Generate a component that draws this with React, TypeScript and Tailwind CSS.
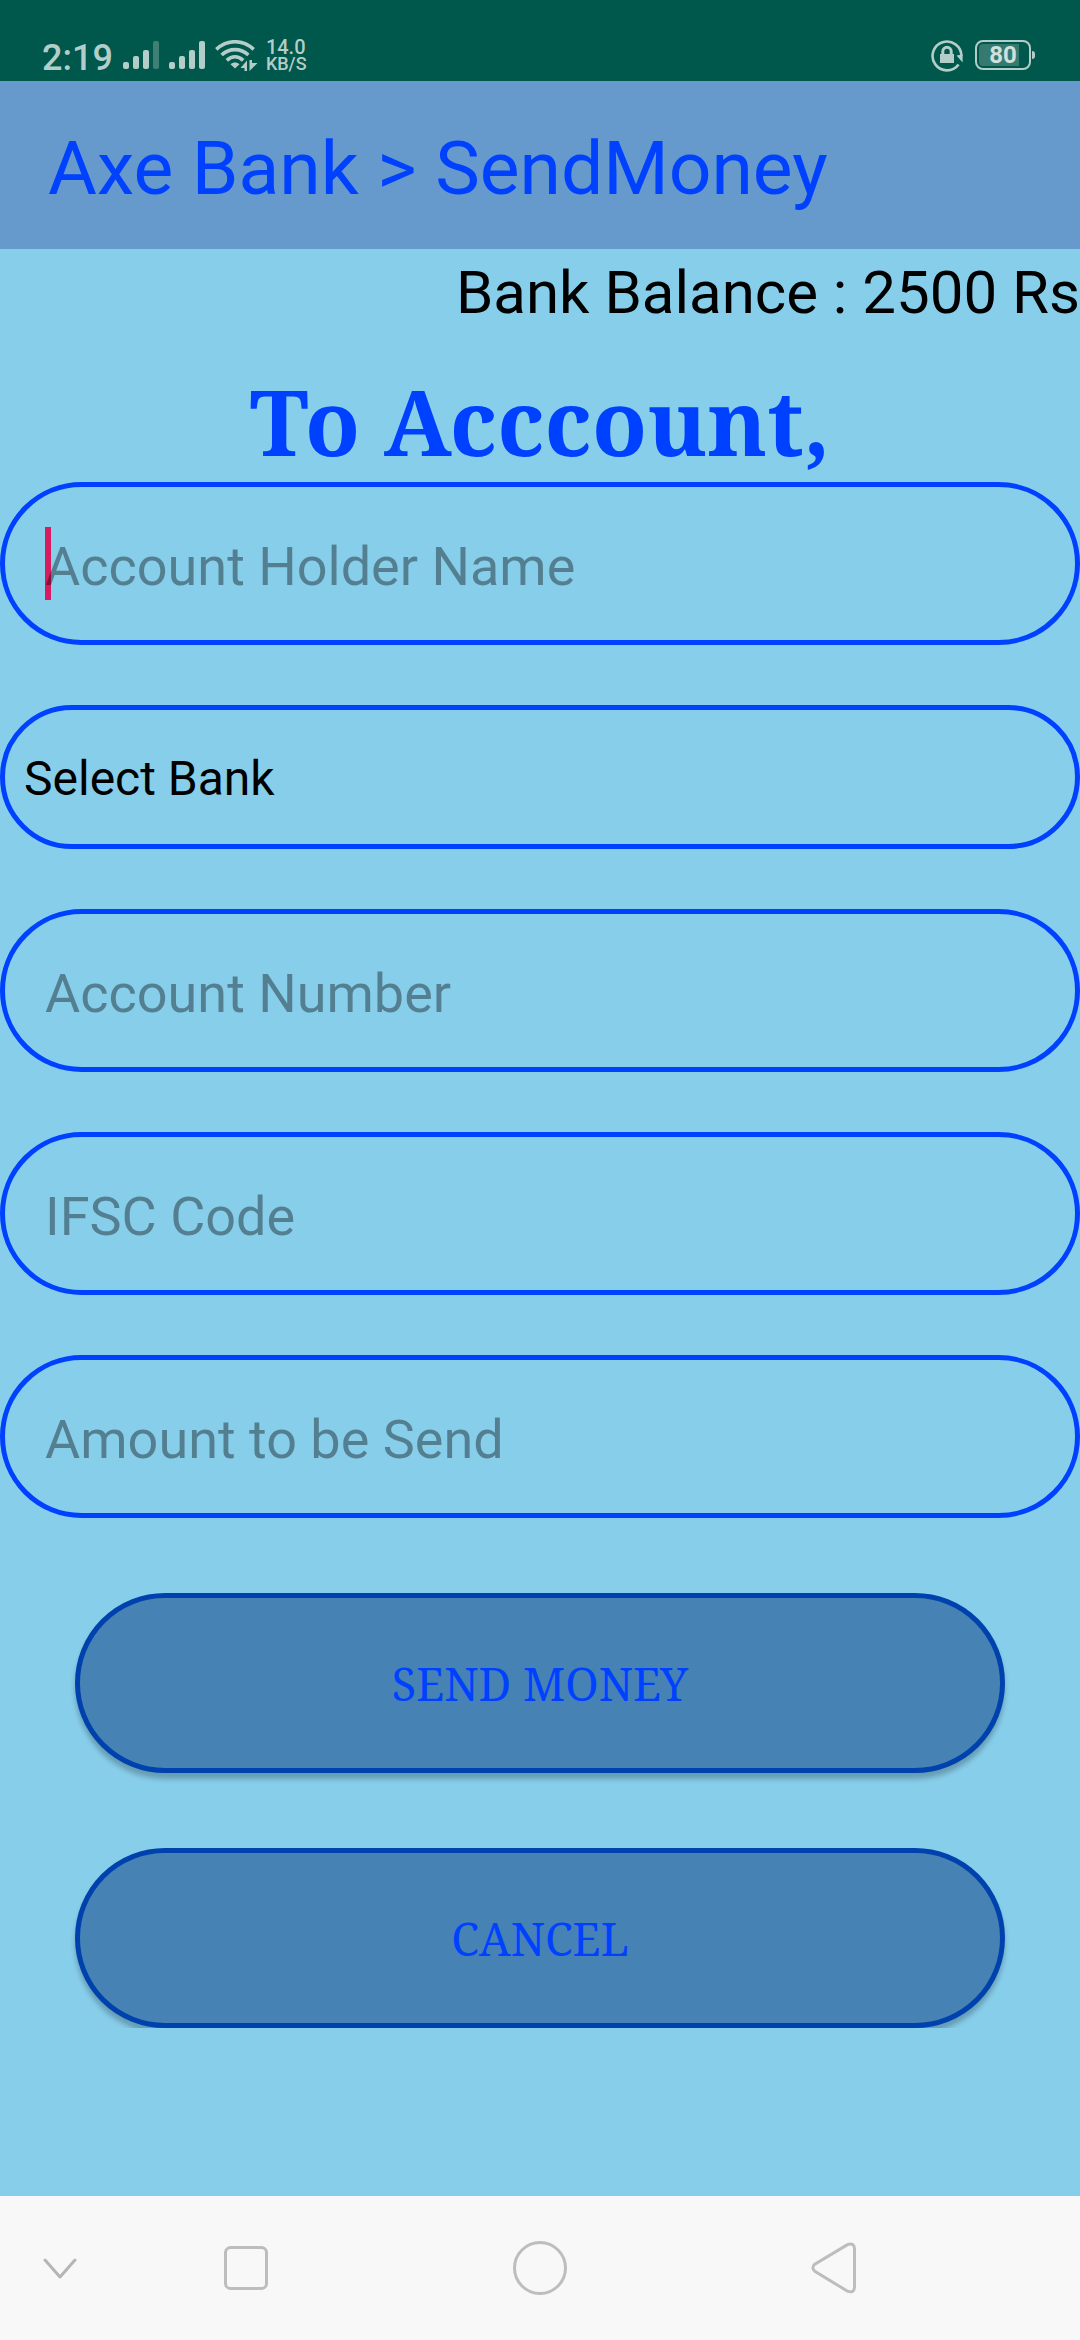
import type { ButtonHTMLAttributes, InputHTMLAttributes } from 'react';

function SignalIcon({ lastBarOpacity }: { lastBarOpacity: number }) {
  return (
    <svg width="36" height="28" viewBox="0 0 36 28" fill="currentColor" aria-hidden="true">
      <rect x="0" y="21" width="6" height="7" rx="2" />
      <rect x="10" y="15" width="6" height="13" rx="2" />
      <rect x="20" y="9" width="6" height="19" rx="2" />
      <rect x="30" y="0" width="6" height="28" rx="2" opacity={lastBarOpacity} />
    </svg>
  );
}

function WifiIcon() {
  return (
    <svg width="43" height="31" viewBox="0 0 43 31" fill="none" stroke="currentColor" strokeWidth="3.6" aria-hidden="true">
      <path d="M1.3 9.3C12.5-.8 27.500-.8 38.700 9.300" />
      <path d="M6.600 15C14.500 7.800 25.500 7.800 33.400 15" />
      <path d="M11.800 20.300C17 15.600 23 15.600 28.200 20.300" />
      <path d="M15.500 24.300C18 22 22 22 24.500 24.300L20 28.500Z" fill="currentColor" stroke="none" />
      <path d="M25.500 28L32 20.500V31H29.500V28Z" fill="currentColor" stroke="none" />
      <path d="M34.500 20V31L42.500 23H37V20Z" fill="currentColor" stroke="none" />
    </svg>
  );
}

function RotationLockIcon() {
  return (
    <svg width="32" height="32" viewBox="0 0 32 32" fill="none" stroke="currentColor" strokeWidth="2.6" aria-hidden="true">
      <path d="M27.600 24.500A14.400 14.400 0 1 1 30.400 16" />
      <path d="M25.500 15.500L31.600 14.500V22.500Z" fill="currentColor" stroke="none" />
      <path d="M11.800 14V11.500A4.200 4.200 0 0 1 20.200 11.500V14" strokeWidth="3" />
      <rect x="9" y="14" width="14" height="9" fill="currentColor" stroke="none" />
    </svg>
  );
}

function Battery({ level }: { level: number }) {
  return (
    <div className="flex items-center gap-px">
      <div className="relative flex h-[30px] w-14 items-center justify-center rounded-lg border-2 border-[#b3cdc9] p-0.5">
        <div className="absolute inset-y-0.5 left-0.5 w-10 rounded-l-sm bg-[#35796f]" />
        <span className="relative text-[24px] leading-[26px] font-bold text-[#cfe0dd]">{level}</span>
      </div>
      <div className="h-2 w-[3px] rounded-r-sm bg-[#b3cdc9]" />
    </div>
  );
}

function StatusBar() {
  return (
    <div className="flex h-[81px] items-end justify-between bg-[#00574b] pr-[45px] pl-[42px] text-[#b3cdc9]">
      <div className="flex h-[50px] items-start">
        <span className="mt-1.5 text-[36px] leading-[42px] font-medium">2:19</span>
        <div className="mt-2.5 ml-2.5 flex gap-2.5">
          <SignalIcon lastBarOpacity={0.35} />
          <SignalIcon lastBarOpacity={1} />
        </div>
        <div className="mt-[9px] ml-2.5">
          <WifiIcon />
        </div>
        <div className="mt-2 ml-2 flex flex-col font-medium">
          <span className="text-[20px] leading-[17px]">14.0</span>
          <span className="text-[18px] leading-[16px]">KB/S</span>
        </div>
      </div>
      <div className="flex h-[41px] items-start gap-3">
        <RotationLockIcon />
        <Battery level={80} />
      </div>
    </div>
  );
}

function Field({ label, focused, ...props }: { label: string; focused?: boolean } & InputHTMLAttributes<HTMLInputElement>) {
  return (
    <div className="relative">
      {focused && <span className="absolute top-[45px] left-[45px] h-[73px] w-1.5 bg-[#d81b60]" />}
      <input
        {...props}
        aria-label={label}
        placeholder={label}
        className="relative block h-[163px] w-full rounded-full border-5 border-[#0041ff] bg-transparent px-10 pt-1.5 text-[54px] text-black outline-none placeholder:text-black/38"
      />
    </div>
  );
}

function ActionButton(props: ButtonHTMLAttributes<HTMLButtonElement>) {
  return (
    <button
      {...props}
      className="h-[180px] w-full rounded-full border-5 border-[#0042ad] bg-[#4682b4] pt-0.5 font-['Noto_Serif','DejaVu_Serif_Condensed','DejaVu_Serif',serif] text-[45px] text-[#0041ff] uppercase shadow-[0_6px_5px_rgba(0,0,0,0.24)]"
    />
  );
}

function NavigationBar() {
  return (
    <nav className="grid h-36 grid-cols-[120fr_252fr_336fr_252fr_120fr] items-center justify-items-center bg-[#f8f8f8] text-[#bdbdbd]">
      <button aria-label="Hide keyboard">
        <svg width="34" height="22" viewBox="0 0 34 22" fill="none" stroke="#b5b5b5" strokeWidth="3" strokeLinecap="round" strokeLinejoin="round">
          <path d="M2 3L17 20L32 3" />
        </svg>
      </button>
      <button aria-label="Recent apps">
        <svg width="44" height="44" viewBox="0 0 44 44" fill="none" stroke="currentColor" strokeWidth="3">
          <rect x="1.500" y="1.500" width="41" height="41" rx="5" />
        </svg>
      </button>
      <button aria-label="Home">
        <svg width="54" height="54" viewBox="0 0 54 54" fill="none" stroke="currentColor" strokeWidth="3">
          <circle cx="27" cy="27" r="25.500" />
        </svg>
      </button>
      <button aria-label="Back">
        <svg width="46" height="52" viewBox="0 0 46 52" fill="none" stroke="currentColor" strokeWidth="3">
          <path d="M36.500 2.600L3.800 22.200Q0 25.500 3.800 29.300L36.500 49.200Q43 51.500 43.500 45.500V6.500Q43 .300 36.500 2.600Z" />
        </svg>
      </button>
    </nav>
  );
}

export default function App() {
  return (
    <div className="flex min-h-screen flex-col bg-[#87ceeb] font-[Roboto,sans-serif]">
      <StatusBar />
      <header className="flex h-[168px] items-center bg-[#6699cc] pt-1.5 pl-12">
        <h1 className="text-[75px] leading-[88px] text-[#0041ff]">Axe Bank &gt; SendMoney</h1>
      </header>
      <main className="flex-1">
        <p className="pt-2 text-right text-[60px] leading-[72px] text-black">Bank Balance : 2500 Rs</p>
        <h2 className="mt-[31px] text-center font-['Noto_Serif','DejaVu_Serif_Condensed','DejaVu_Serif',serif] text-[90px] leading-[122px] font-bold text-[#0041ff]">
          To Acccount,
        </h2>
        <form className="overflow-hidden" onSubmit={(event) => event.preventDefault()}>
          <div className="flex flex-col gap-15">
            <Field label="Account Holder Name" name="holder" focused />
            <select
              aria-label="Select Bank"
              className="h-36 w-full appearance-none rounded-full border-5 border-[#0041ff] bg-transparent pt-1 pl-[19px] text-[48px] text-black outline-none"
            >
              <option>Select Bank</option>
            </select>
            <Field label="Account Number" name="account" inputMode="numeric" />
            <Field label="IFSC Code" name="ifsc" />
            <Field label="Amount to be Send" name="amount" inputMode="decimal" />
          </div>
          <div className="mt-[75px] flex flex-col gap-[75px] px-[75px]">
            <ActionButton type="submit">Send Money</ActionButton>
            <ActionButton type="button">Cancel</ActionButton>
          </div>
        </form>
      </main>
      <NavigationBar />
    </div>
  );
}
